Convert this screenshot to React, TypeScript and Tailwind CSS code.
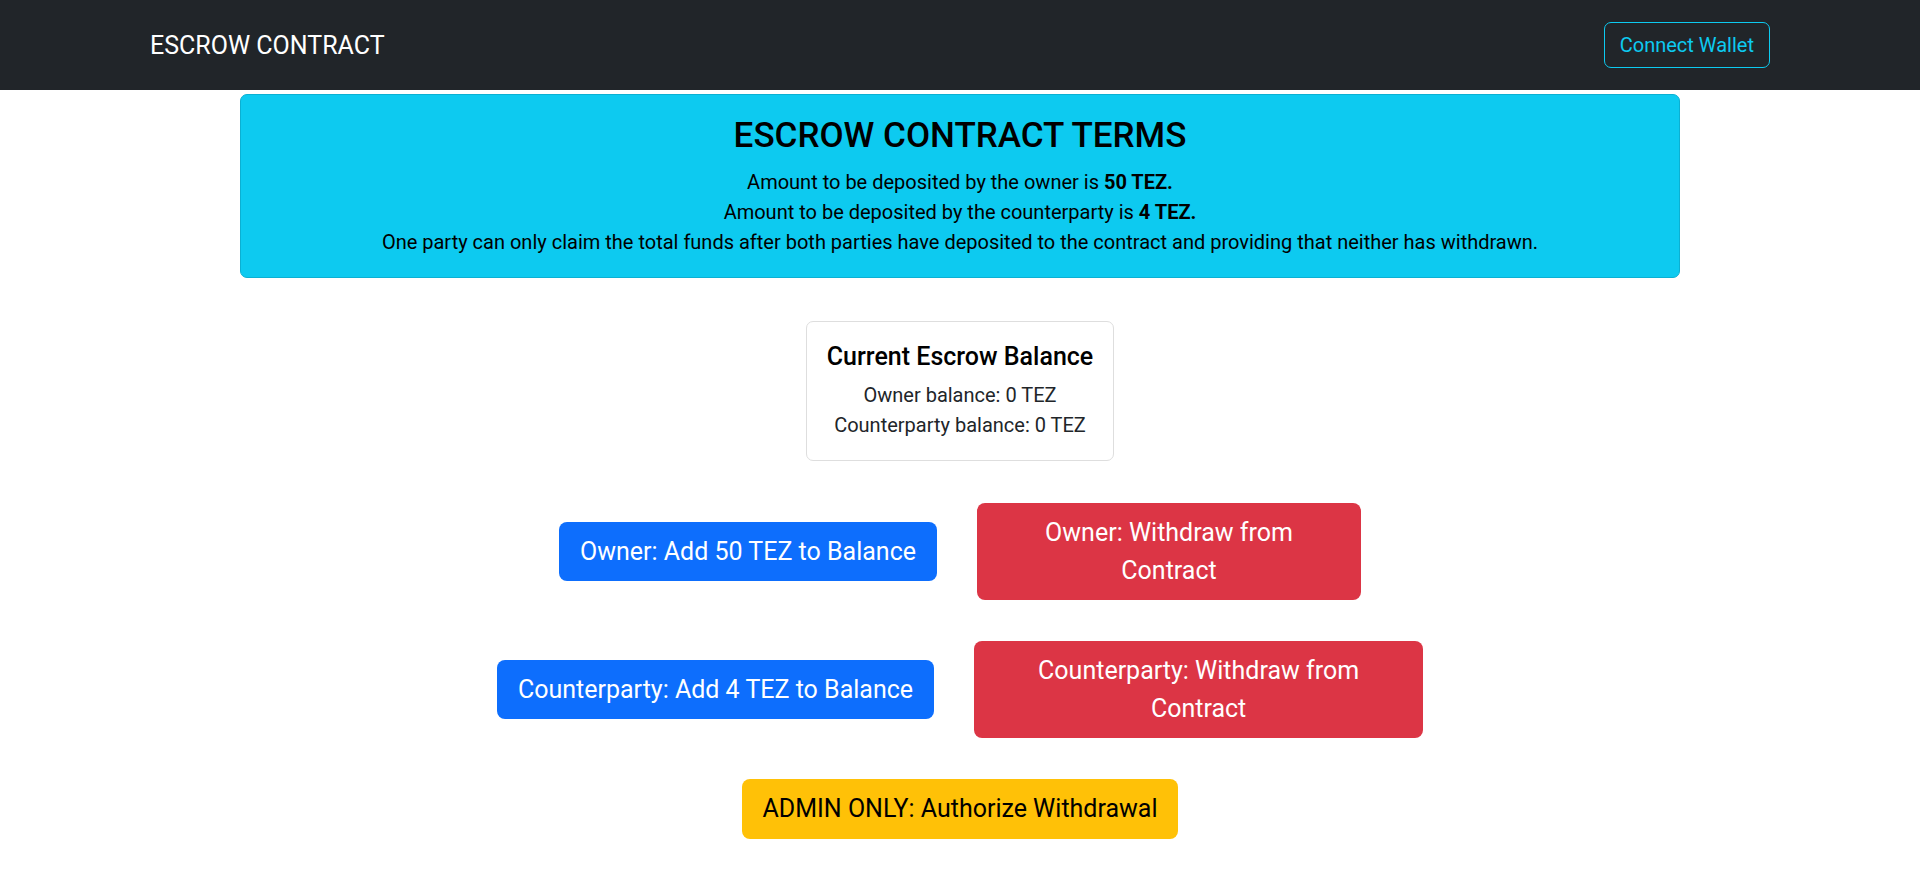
import React from "react";

function Navbar() {
  return (
    <nav className="w-full h-[90px] bg-[#212529] px-[150px] flex items-center justify-between">
      <span className="text-[25px] leading-[37px] text-white">ESCROW CONTRACT</span>
      <button className="border border-[#0dcaf0] text-[#0dcaf0] text-[20px] leading-[30px] px-[15px] py-[7px] rounded-[7px]">
        Connect Wallet
      </button>
    </nav>
  );
}

function Terms() {
  return (
    <div className="w-[1440px] mx-auto mt-1 bg-[#0dcaf0] border border-[#0bb0d3] rounded-[7px] p-5 text-black text-center">
      <h3 className="text-[35px] leading-[42px] font-medium mb-[10px]">ESCROW CONTRACT TERMS</h3>
      <p className="text-[20px] leading-[30px]">
        Amount to be deposited by the owner is <b>50 TEZ.</b>
      </p>
      <p className="text-[20px] leading-[30px]">
        Amount to be deposited by the counterparty is <b>4 TEZ.</b>
      </p>
      <p className="text-[20px] leading-[30px]">
        One party can only claim the total funds after both parties have deposited to the contract and providing that neither has withdrawn.
      </p>
    </div>
  );
}

function BalanceCard() {
  return (
    <div className="mx-auto mt-[43px] w-fit border border-[#dedede] rounded-[7px] p-5 text-center text-[#212529]">
      <h5 className="text-[25px] leading-[30px] font-medium text-black mb-2">Current Escrow Balance</h5>
      <p className="text-[20px] leading-[30px]">Owner balance: 0 TEZ</p>
      <p className="text-[20px] leading-[30px]">Counterparty balance: 0 TEZ</p>
    </div>
  );
}

const btn = "text-[25px] leading-[37.5px] px-5 py-[10px] border border-transparent rounded-[8px] mx-5";

export default function App() {
  return (
    <main className="w-screen min-h-screen bg-white font-[Roboto,'Noto_Sans',sans-serif]">
      <Navbar />
      <Terms />
      <BalanceCard />
      <div className="flex flex-col items-center mt-[42px] gap-[41px]">
        <div className="flex justify-center items-center">
          <button className={btn + " bg-[#0d6efd] text-white"}>Owner: Add 50 TEZ to Balance</button>
          <button className={btn + " bg-[#dc3545] text-white w-[384px]"}>
            Owner: Withdraw from<br />Contract
          </button>
        </div>
        <div className="flex justify-center items-center">
          <button className={btn + " bg-[#0d6efd] text-white"}>Counterparty: Add 4 TEZ to Balance</button>
          <button className={btn + " bg-[#dc3545] text-white w-[449px]"}>
            Counterparty: Withdraw from<br />Contract
          </button>
        </div>
        <button className={btn + " bg-[#ffc107] text-black"}>ADMIN ONLY: Authorize Withdrawal</button>
      </div>
    </main>
  );
}
